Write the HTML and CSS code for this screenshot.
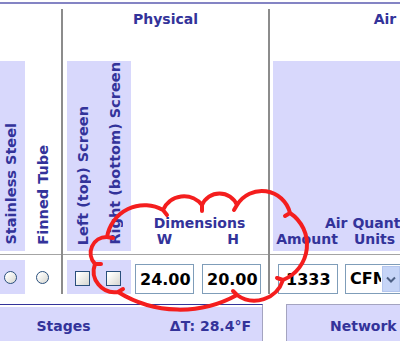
FILE: index.html
```html
<!DOCTYPE html>
<html lang="en">
<head>
    <meta charset="UTF-8">
    <title>Coil selection</title>
    <link rel="stylesheet" href="styles.css">
</head>
<body>
    <div class="topbar"></div>

    <div class="sheet">
        <div class="grp grp-left"></div>
        <div class="grp grp-phys">Physical</div>
        <div class="grp grp-air">Air</div>

        <div class="hd vert lav hd-steel"><span>Stainless Steel</span></div>
        <div class="hd vert hd-fin"><span>Finned Tube</span></div>
        <div class="hd vert lav hd-left"><span>Left (top) Screen</span></div>
        <div class="hd vert lav hd-right"><span>Right (bottom) Screen</span></div>
        <div class="hd hd-dims">
            <div>Dimensions</div>
            <div class="sub sub-dims"><span>W</span><span>H</span></div>
        </div>
        <div class="hd lav hd-airq">
            <div class="airq-title">Air Quantity</div>
            <div class="sub sub-air"><span>Amount</span><span>Units</span><span></span></div>
        </div>

        <div class="rule"></div>
        <div class="sep sep1"></div>
        <div class="sep sep2"></div>

        <div class="cell lav c-steel"><input type="radio" name="mat"></div>
        <div class="cell c-fin"><input type="radio" name="mat"></div>
        <div class="cell lav c-left"><input type="checkbox"></div>
        <div class="cell lav c-right"><input type="checkbox"></div>
        <div class="cell c-w"><input type="text" class="num" value="24.00"></div>
        <div class="cell c-h"><input type="text" class="num" value="20.00"></div>
        <div class="cell c-amt"><input type="text" class="num num-amt" value="1333"></div>
        <div class="cell c-units">
            <div class="select">
                <span class="select-text">CFM</span>
                <span class="select-btn">
                    <svg width="10" height="7" viewBox="0 0 10 7"><path d="M1 1.5 L5 5.5 L9 1.5" fill="none" stroke="#4d6185" stroke-width="2"/></svg>
                </span>
            </div>
        </div>
    </div>

    <div class="panels">
        <div class="panel panel-stages">
            <span class="stages">Stages</span>
            <span class="delta">&Delta;T: 28.4&deg;F</span>
        </div>
        <div class="panel panel-net">Network</div>
    </div>

    <!-- review markup drawn over the dimensions -->
    <svg class="cloud" width="400" height="341" viewBox="0 0 400 341">
        <path d="M107 237
                 A38 38 0 0 1 163 210 l4 5 m-4 -5
                 A23 23 0 0 1 202 205 l0 6 m0 -6
                 A19 19 0 0 1 237 205 l-3 5 m3 -5
                 A29 29 0 0 1 290 213 l-5 3 m5 -3
                 A38 38 0 0 1 283 280 l-6 -2 m6 2
                 A30 30 0 0 1 237 295 l-4 -4 m4 4
                 A118 118 0 0 1 118 292 l5 -3 m-5 3
                 A21 21 0 0 1 95 264 l6 0 m-6 0
                 A16 16 0 0 1 107 237 l6 1"
              fill="none" stroke="#f41e1e" stroke-width="4" stroke-linecap="round" stroke-linejoin="round"/>
    </svg>
</body>
</html>
```

FILE: styles.css
```css
* {
    box-sizing: border-box;
}

body {
    margin: 0;
    width: 400px;
    height: 341px;
    overflow: hidden;
    position: relative;
    background: #fff;
    font-family: "DejaVu Sans", Verdana, sans-serif;
    color: #33339a;
}

.topbar {
    height: 2px;
    margin-top: 2px;
    background: #8484c4;
}

.sheet {
    display: grid;
    width: 500px;
    margin-top: 5px;
    grid-template-columns: 25px 36px 2px 4px 32px 32px 67px 70px 2px 3px 68px 67px 92px;
    grid-template-rows: 52px 190px 9px 34px;
}

.lav {
    background: #d8d8fc;
}

.grp {
    grid-row: 1;
    font-weight: bold;
    font-size: 14px;
    text-align: center;
    padding-top: 2px;
}

.grp-left { grid-column: 1 / 3; }
.grp-phys { grid-column: 4 / 9; }
.grp-air  { grid-column: 10 / 14; }

.hd {
    grid-row: 2;
    font-weight: bold;
    font-size: 14px;
    line-height: 16px;
}

.vert {
    display: flex;
    justify-content: center;
    align-items: flex-end;
    padding-bottom: 6px;
    font-size: 14.5px;
}

.vert span {
    writing-mode: vertical-rl;
    transform: rotate(180deg);
    white-space: nowrap;
}

.hd-steel { grid-column: 1; padding-right: 4px; }
.hd-fin   { grid-column: 2; }
.hd-left  { grid-column: 5; }
.hd-right { grid-column: 6; }

.hd-dims {
    grid-column: 7 / 9;
    display: flex;
    flex-direction: column;
    justify-content: flex-end;
    text-align: center;
    padding-bottom: 4px;
}

.hd-airq {
    grid-column: 11 / 14;
    display: flex;
    flex-direction: column;
    justify-content: flex-end;
    padding-bottom: 4px;
}

.airq-title {
    text-align: center;
    padding-right: 27px;
}

.sub {
    display: grid;
    text-align: center;
}

.sub-dims { grid-template-columns: 67px 70px; }
.sub-air  { grid-template-columns: 68px 67px 92px; }

.rule {
    grid-row: 3;
    grid-column: 1 / -1;
    border-bottom: 1px solid #a4a4a4;
    height: 4px;
}

.sep {
    grid-row: 1 / 5;
    background: #8c8c8c;
}

.sep1 { grid-column: 3; }
.sep2 { grid-column: 9; }

.cell {
    grid-row: 4;
    display: flex;
    align-items: center;
}

.c-steel { grid-column: 1; padding-left: 4px; }
.c-fin   { grid-column: 2; padding-left: 11px; }
.c-left  { grid-column: 5; padding-left: 8px; }
.c-right { grid-column: 6; padding-left: 7px; }
.c-w     { grid-column: 7; padding-left: 4px; }
.c-h     { grid-column: 8; padding-left: 4px; }
.c-amt   { grid-column: 11; padding-left: 5px; }
.c-units { grid-column: 12 / 14; padding-left: 4px; }

input[type="radio"],
input[type="checkbox"] {
    appearance: none;
    margin: 0;
    border: 1px solid #2a4f7c;
    background: linear-gradient(135deg, #fdfdfb 20%, #d6d6d0);
}

input[type="radio"] {
    width: 13px;
    height: 13px;
    border-radius: 50%;
}

input[type="checkbox"] {
    width: 15px;
    height: 15px;
    margin-top: 2px;
}

.num {
    width: 59px;
    height: 30px;
    margin-top: 4px;
    border: 1px solid #7f9db9;
    padding: 0 0 0 4px;
    font-family: "DejaVu Sans", Verdana, sans-serif;
    font-weight: bold;
    font-size: 16px;
    color: #000;
}

.num-amt {
    width: 60px;
    padding-left: 7px;
}

.select {
    display: flex;
    width: 57px;
    height: 30px;
    margin-top: 4px;
    border: 1px solid #7f9db9;
    background: #fff;
}

.select-text {
    flex: 1;
    padding-left: 4px;
    line-height: 28px;
    font-weight: bold;
    font-size: 16px;
    color: #000;
    overflow: hidden;
    white-space: nowrap;
}

.select-btn {
    width: 18px;
    flex-shrink: 0;
    margin: 1px;
    display: flex;
    align-items: center;
    justify-content: center;
    background: #c6d5f7;
    border: 1px solid #b4c6ee;
}

.panels {
    display: flex;
    gap: 23px;
    margin-top: 10px;
}

.panel {
    flex-shrink: 0;
    height: 40px;
    background: #d8d8fc;
    font-weight: bold;
    font-size: 14px;
    padding-top: 13px;
}

.panel-stages {
    display: flex;
    width: 263px;
    border-top: 1px solid #33339a;
    border-right: 1px solid #a4a4c0;
    box-shadow: inset 0 2px 0 #fff;
}

.stages {
    width: 127px;
    text-align: center;
}

.delta {
    flex: 1;
    text-align: right;
    padding-right: 11px;
}

.panel-net {
    width: 160px;
    border: 1px solid #a4a4c0;
    padding-left: 43px;
}

.cloud {
    position: absolute;
    left: 0;
    top: 0;
    pointer-events: none;
}
```
